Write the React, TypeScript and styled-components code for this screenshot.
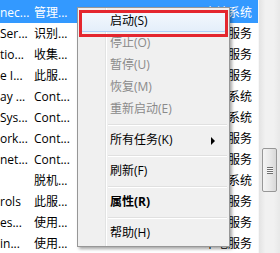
import styled, { createGlobalStyle } from "styled-components";

const rows = [
	{ name: "nec...", desc: "管理...", logon: "本地系统" },
	{ name: "Ser...", desc: "识别...", logon: "本地服务" },
	{ name: "tio...", desc: "收集...", logon: "本地服务" },
	{ name: "e I...", desc: "此服...", logon: "本地服务" },
	{ name: "ay ...", desc: "Cont...", logon: "本地系统" },
	{ name: "Sys...", desc: "Cont...", logon: "本地系统" },
	{ name: "ork...", desc: "Cont...", logon: "本地服务" },
	{ name: "net...", desc: "Cont...", logon: "本地服务" },
	{ name: "", desc: "脱机...", logon: "本地系统" },
	{ name: "rols", desc: "此服...", logon: "本地服务" },
	{ name: "es...", desc: "使用...", logon: "本地服务" },
	{ name: "in...", desc: "使用...", logon: "本地服务" },
];

type Entry = { label: string; disabled?: boolean; bold?: boolean; submenu?: boolean; hot?: boolean } | "sep";

const menu: Entry[] = [
	{ label: "启动(S)", hot: true },
	{ label: "停止(O)", disabled: true },
	{ label: "暂停(U)", disabled: true },
	{ label: "恢复(M)", disabled: true },
	{ label: "重新启动(E)", disabled: true },
	"sep",
	{ label: "所有任务(K)", submenu: true },
	"sep",
	{ label: "刷新(F)" },
	"sep",
	{ label: "属性(R)", bold: true },
	"sep",
	{ label: "帮助(H)" },
];

export default function App() {
	return (
		<>
			<GlobalStyle />
			<StyledScreen>
				<StyledList>
					{rows.map((row, i) => (
						<StyledRow key={i} $selected={i === 0}>
							<span>{row.name}</span>
							<span>{row.desc}</span>
							<span>{row.logon}</span>
						</StyledRow>
					))}
				</StyledList>
				<StyledScrollbar>
					<StyledThumb>
						<StyledGrip />
					</StyledThumb>
				</StyledScrollbar>
				<StyledMenu>
					{menu.map((entry, i) =>
						entry === "sep" ? (
							<StyledSeparator key={i} />
						) : (
							<StyledItem key={i} $disabled={entry.disabled} $bold={entry.bold} $hot={entry.hot}>
								{entry.label}
								{entry.submenu && <StyledArrow />}
							</StyledItem>
						)
					)}
					<StyledCallout />
				</StyledMenu>
			</StyledScreen>
		</>
	);
}

const GlobalStyle = createGlobalStyle`
	body {
		margin: 0;
		background: #fff;
		overflow: hidden;
	}
`;
const StyledScreen = styled.div`
	position: relative;
	width: 280px;
	height: 253px;
	display: flex;
	overflow: hidden;
	font: 12px/21px "Open Sans", "Noto Sans CJK SC", sans-serif;
	color: #000;
`;
const StyledList = styled.div`
	width: 258px;
	padding-top: 2px;
	display: flex;
	flex-direction: column;
`;
const StyledRow = styled.div<{ $selected?: boolean }>`
	height: 21px;
	display: grid;
	grid-template-columns: 34px 170px 1fr;
	white-space: nowrap;
	background: ${(p) => (p.$selected ? "#3399ff" : "transparent")};
	box-shadow: ${(p) => (p.$selected ? "0 -2px 0 #3399ff" : "none")};
	color: ${(p) => (p.$selected ? "#fff" : "#000")};
`;
const StyledScrollbar = styled.div`
	width: 22px;
	display: flex;
	flex-direction: column;
	padding: 148px 3px 0 3px;
	background: linear-gradient(to right, #e3e3e3, #f1f1f1 30%, #f1f1f1 70%, #e8e8e8);
	border-left: 1px solid #f8f8f8;
	box-sizing: border-box;
`;
const StyledThumb = styled.div`
	height: 42px;
	border: 1px solid #979797;
	border-radius: 2px;
	background: linear-gradient(to right, #f4f4f4, #e9e9e9 50%, #d8d8d8);
	display: flex;
	align-items: center;
	justify-content: center;
`;
const StyledGrip = styled.div`
	width: 6px;
	height: 7px;
	background: repeating-linear-gradient(to bottom, #6f6f6f 0 1px, #f8f8f8 1px 2px);
`;
const StyledMenu = styled.div`
	position: absolute;
	left: 77px;
	top: 7px;
	width: 153px;
	box-sizing: border-box;
	padding: 2px;
	border: 1px solid #979797;
	background: linear-gradient(to right, transparent 27px, #e2e3e3 27px 28px, #fff 28px 29px, transparent 29px), #f0f0f0;
	box-shadow: 2px 2px 3px rgba(0, 0, 0, 0.35);
`;
const StyledItem = styled.div<{ $disabled?: boolean; $bold?: boolean; $hot?: boolean }>`
	position: relative;
	height: 22px;
	line-height: 22px;
	padding-left: 29px;
	box-sizing: border-box;
	color: ${(p) => (p.$disabled ? "#8a8a8a" : "#000")};
	font-weight: ${(p) => (p.$bold ? 700 : 400)};
	border-radius: 3px;
	border: 1px solid ${(p) => (p.$hot ? "#aecff7" : "transparent")};
	background: ${(p) => (p.$hot ? "linear-gradient(#f4f8fd, #e4eefa)" : "transparent")};
	display: flex;
	align-items: center;
`;
const StyledArrow = styled.span`
	position: absolute;
	right: 11px;
	top: 7px;
	border-left: 4px solid #000;
	border-top: 4px solid transparent;
	border-bottom: 4px solid transparent;
`;
const StyledSeparator = styled.div`
	height: 9px;
	margin-left: 28px;
	background: linear-gradient(to bottom, transparent 4px, #e0e0e0 4px 5px, #fff 5px 6px, transparent 6px);
`;
const StyledCallout = styled.div`
	position: absolute;
	left: 1px;
	top: 2px;
	width: 149px;
	height: 27px;
	box-sizing: border-box;
	border: 3px solid #e4262e;
`;
